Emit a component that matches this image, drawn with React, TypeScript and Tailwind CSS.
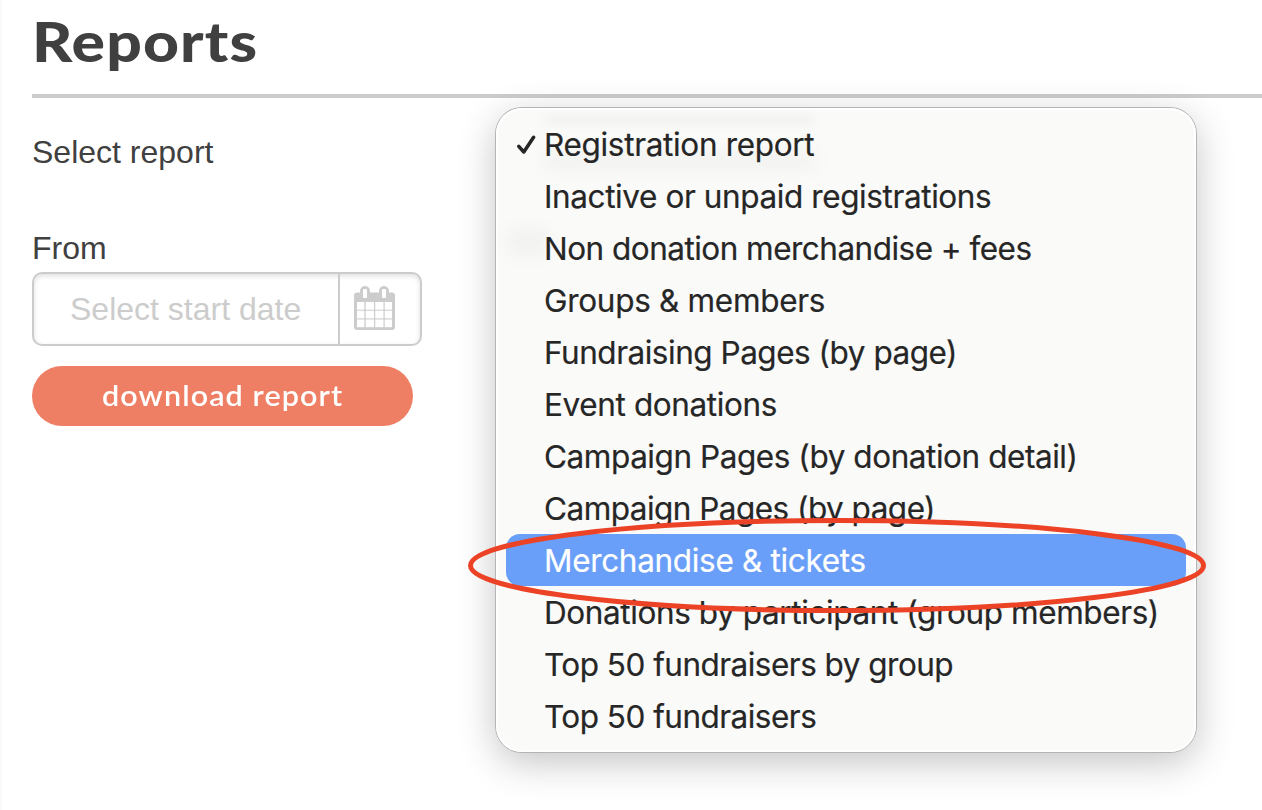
import React, { useState } from "react";
import clsx from "clsx";

const reports = [
    { title: "Registration report", spacing: "tracking-[-0.32px]" },
    { title: "Inactive or unpaid registrations", spacing: "tracking-[-0.4px]" },
    { title: "Non donation merchandise + fees", spacing: "tracking-[-0.52px]" },
    { title: "Groups & members", spacing: "tracking-[-0.3px]" },
    { title: "Fundraising Pages (by page)", spacing: "tracking-[-0.48px]" },
    { title: "Event donations", spacing: "tracking-[-0.38px]" },
    { title: "Campaign Pages (by donation detail)", spacing: "tracking-[-0.44px]" },
    { title: "Campaign Pages (by page)", spacing: "tracking-[-0.53px]" },
    { title: "Merchandise & tickets", spacing: "tracking-[-0.32px]" },
    { title: "Donations by participant (group members)", spacing: "tracking-[-0.4px]" },
    { title: "Top 50 fundraisers by group", spacing: "tracking-[-0.52px]" },
    { title: "Top 50 fundraisers", spacing: "tracking-[-0.52px]" },
];

const CalendarIcon = () => (
    <svg width="42" height="45" viewBox="0 0 42 45" fill="none">
        <rect x="0" y="6.5" width="41" height="37.5" rx="3" fill="#cccccc" />
        <rect x="6" y="0" width="10" height="16" rx="5" fill="#cccccc" />
        <rect x="25" y="0" width="10" height="16" rx="5" fill="#cccccc" />
        <rect x="9" y="3" width="4" height="9" rx="1" fill="#ffffff" />
        <rect x="28" y="3" width="4" height="9" rx="1" fill="#ffffff" />
        {[16, 24.7, 33.5].map((y) =>
            [3, 11.7, 21.2, 30.7].map((x) => (
                <rect key={`${x}-${y}`} x={x} y={y} width={x === 3 ? 7.4 : x === 30.7 ? 7.3 : 8.3} height="7.7" fill="#ffffff" />
            ))
        )}
    </svg>
);

const CheckIcon = () => (
    <svg width="20" height="20" viewBox="0 0 20 20" fill="none">
        <path d="M2.8 11.3 L7.8 17 L17.6 2.3" stroke="#262626" strokeWidth="3.5" strokeLinecap="round" strokeLinejoin="round" />
    </svg>
);

const ReportMenu = () => {
    const [selected, setSelected] = useState(0);
    const [active, setActive] = useState(8);

    return (
        <div className="relative mt-[10px] h-[644px] w-[700px] shrink-0">
            <ul className="h-full rounded-[26px] bg-[#fafaf9] p-[10px] font-['Inter',sans-serif] text-[31.5px] text-[#262626] shadow-[0_0_0_1px_#b4b4b4,inset_0_0_0_2px_#ffffff,0_10px_38px_rgba(0,0,0,0.24)]">
                {reports.map((report, index) => (
                    <li
                        key={report.title}
                        onMouseEnter={() => setActive(index)}
                        onClick={() => setSelected(index)}
                        className={clsx(
                            "flex h-[52px] cursor-default items-center rounded-[14px] pt-[2px] pl-[10px] leading-[50px] whitespace-nowrap [-webkit-text-stroke:0.2px]",
                            active === index && "bg-[#699ff8] text-white"
                        )}
                    >
                        <span className="w-7 shrink-0">{selected === index && <CheckIcon />}</span>
                        <span className={report.spacing}>{report.title}</span>
                    </li>
                ))}
            </ul>
            <div className="pointer-events-none absolute top-2 left-12 h-2 w-[270px] bg-black/4 blur-[5px]" />
            <div className="pointer-events-none absolute top-[44px] left-12 h-4 w-[270px] bg-black/4 blur-[9px]" />
            <div className="pointer-events-none absolute top-[120px] left-3 h-7 w-10 bg-black/3 blur-[8px]" />
            {/* hand drawn ring round the merchandise row */}
            <svg className="pointer-events-none absolute top-[408px] -left-7" width="740" height="100" viewBox="0 0 740 100" fill="none">
                <ellipse cx="369" cy="49.5" rx="366.5" ry="45" stroke="#ec4226" strokeWidth="5" />
            </svg>
        </div>
    );
};

const App = () => {
    return (
        <div className="h-[810px] w-full overflow-hidden border-l-2 border-[#fafafa] bg-white pl-[30px] font-['Liberation_Sans',Arial,sans-serif] text-[32px] text-[#404040]">
            <header className="h-[98px] border-b-4 border-[#cccccc]">
                <h1 className="origin-left scale-x-[1.135] pt-[6px] font-['Lato',sans-serif] text-[55px] leading-[70px] font-black tracking-[1px]">Reports</h1>
            </header>

            <main className="flex">
                <section className="w-[464px] shrink-0">
                    <p className="mt-9 leading-9">Select report</p>
                    <p className="mt-[60px] leading-9">From</p>
                    <div className="mt-[6px] flex h-[74px] w-[390px] rounded-[10px] border-2 border-[#cccccc] shadow-[inset_0_2px_5px_rgba(0,0,0,0.13)]">
                        <input
                            placeholder="Select start date"
                            className="w-[306px] border-r-2 border-[#cccccc] pl-9 text-[32px] outline-none placeholder:text-[#cccccc]"
                        />
                        <button className="pb-[2px] pl-[14px]" aria-label="Calendar">
                            <CalendarIcon />
                        </button>
                    </div>
                    <button className="mt-5 flex h-[60px] w-[381px] items-center justify-center rounded-full bg-[#ee7f64] pb-[3px] font-['Lato',sans-serif] text-[28px] font-semibold tracking-[1px] text-white">
                        <span className="scale-x-[1.09]">download report</span>
                    </button>
                </section>
                <ReportMenu />
            </main>
        </div>
    );
};

export default App;
